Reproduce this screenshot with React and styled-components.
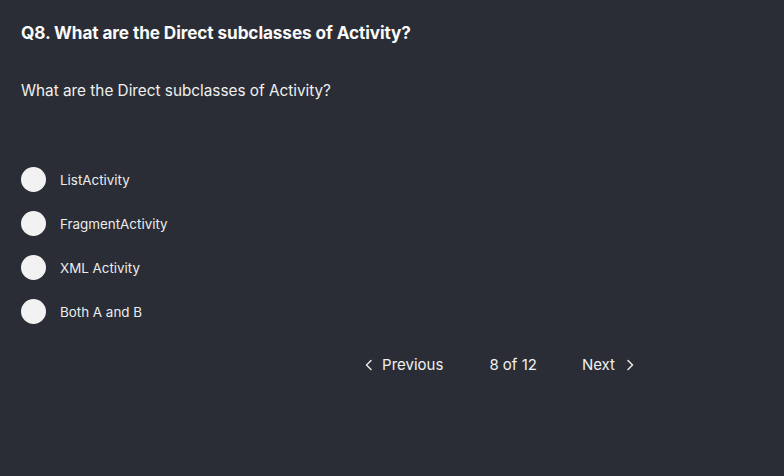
import React, { useState } from "react";
import styled, { createGlobalStyle } from "styled-components";

const Global = createGlobalStyle`
  html, body {
    margin: 0;
    padding: 0;
    background: #2a2d35;
  }
  body {
    font-family: "Inter", "Liberation Sans", sans-serif;
    color: #f2f2f2;
  }
`;

const Page = styled.div`
  width: 784px;
  height: 476px;
  box-sizing: border-box;
  padding: 22px 21px 0;
  background: #2a2d35;
`;

const Title = styled.h2`
  margin: 0;
  font-size: 17.2px;
  font-weight: 700;
  line-height: 22px;
  letter-spacing: -0.1px;
  color: #fafafa;
`;

const Question = styled.p`
  margin: 37px 0 0;
  font-size: 15.3px;
  line-height: 20px;
  font-weight: 400;
  color: #f0f0f0;
`;

const Options = styled.ul`
  list-style: none;
  margin: 66px 0 0;
  padding: 0;
  display: flex;
  flex-direction: column;
  gap: 19px;
`;

const Option = styled.li`
  display: flex;
  align-items: center;
  gap: 14px;
  cursor: pointer;
  font-size: 13.4px;
  color: #ececec;
`;

const Radio = styled.span`
  width: 25px;
  height: 25px;
  border-radius: 50%;
  background: #f2f2f2;
  box-sizing: border-box;
  border: ${(p) => (p.$checked ? "7px solid #4b7bec" : "none")};
`;

const Pager = styled.div`
  display: flex;
  justify-content: flex-end;
  align-items: center;
  margin: 31px 128px 0 0;
  font-size: 15px;
  color: #f0f0f0;
`;

const PagerButton = styled.button`
  display: flex;
  align-items: center;
  gap: ${(p) => p.$gap}px;
  background: none;
  border: none;
  padding: 0;
  font: inherit;
  color: inherit;
  cursor: pointer;
`;

const Count = styled.span`
  margin: 0 45px 0 46px;
`;

const Chevron = ({ dir }) => (
  <svg width="10" height="12" viewBox="0 0 10 12" fill="none">
    <path
      d={dir === "left" ? "M7 1.5 L2.5 6 L7 10.5" : "M3 1.5 L7.5 6 L3 10.5"}
      stroke="#e8e8e8"
      strokeWidth="1.5"
      strokeLinecap="round"
      strokeLinejoin="round"
    />
  </svg>
);

const options = ["ListActivity", "FragmentActivity", "XML Activity", "Both A and B"];

export default function App() {
  const [picked, setPicked] = useState(null);

  return (
    <Page>
      <Global />
      <Title>Q8. What are the Direct subclasses of Activity?</Title>
      <Question>What are the Direct subclasses of Activity?</Question>
      <Options>
        {options.map((o, i) => (
          <Option key={o} onClick={() => setPicked(i)}>
            <Radio $checked={picked === i} />
            {o}
          </Option>
        ))}
      </Options>
      <Pager>
        <PagerButton $gap={8}>
          <Chevron dir="left" />
          Previous
        </PagerButton>
        <Count>8 of 12</Count>
        <PagerButton $gap={10}>
          Next
          <Chevron dir="right" />
        </PagerButton>
      </Pager>
    </Page>
  );
}
